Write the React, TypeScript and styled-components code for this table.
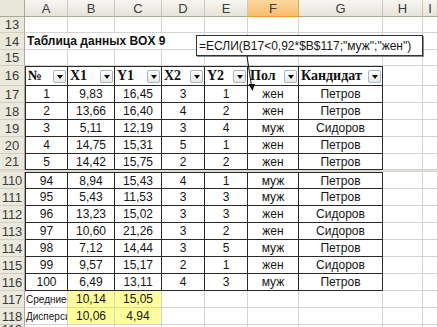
import React from 'react';
import styled, { createGlobalStyle, css } from 'styled-components';

const Global = createGlobalStyle`
  html, body { margin: 0; padding: 0; background: #ffffff; }
  body { width: 438px; height: 327px; overflow: hidden; font-family: "Liberation Sans", Arial, sans-serif; }
`;

const Sheet = styled.div`
  position: relative;
  width: 438px;
  height: 327px;
  overflow: hidden;
  display: grid;
  grid-template-columns: 25px 43px 47px 47px 43px 43px 51px 84px 40px 15px;
  grid-template-rows: 17px 16px 17px 16px 20px repeat(4, 17px) 16px 2px repeat(9, 17px) 10px;
`;

const Corner = styled.div`
  box-sizing: border-box;
  background: #e9e7da;
  border-right: 1px solid #aca899;
  border-bottom: 1px solid #aca899;
`;

const ColHead = styled.div<{ $active?: boolean }>`
  box-sizing: border-box;
  display: flex;
  align-items: center;
  justify-content: center;
  font-size: 13px;
  color: #3c3c3c;
  background: ${p => (p.$active ? 'linear-gradient(#fbd89e, #f7be6c)' : 'linear-gradient(#f7f6f1, #e6e4d9)')};
  border-right: 1px solid ${p => (p.$active ? '#e9a54a' : '#cbc8b8')};
  border-bottom: 1px solid ${p => (p.$active ? '#f29536' : '#aca899')};
`;

const RowHead = styled.div`
  box-sizing: border-box;
  display: flex;
  align-items: center;
  justify-content: center;
  font-size: 13px;
  color: #3c3c3c;
  background: #ebe9dc;
  border-right: 1px solid #aca899;
  border-bottom: 1px solid #d2cfc0;
`;

type Align = 'left' | 'center';

const Cell = styled.div<{ $table?: boolean; $left?: boolean; $top?: boolean; $fill?: string; $align?: Align; $small?: boolean }>`
  box-sizing: border-box;
  min-width: 0;
  border-right: 1px solid ${p => (p.$table ? '#2a2a2a' : '#d3d3d3')};
  border-bottom: 1px solid ${p => (p.$table ? '#2a2a2a' : '#d3d3d3')};
  ${p => p.$left && css`border-left: 1px solid #2a2a2a;`}
  ${p => p.$top && css`border-top: 1px solid #2a2a2a;`}
  background: ${p => p.$fill ?? '#ffffff'};
  display: flex;
  align-items: center;
  justify-content: ${p => (p.$align === 'left' ? 'flex-start' : 'center')};
  padding: 0 ${p => (p.$align === 'left' ? '1px' : '2px')};
  font-size: ${p => (p.$small ? '10px' : '12px')};
  color: #151515;
  white-space: nowrap;
  overflow: hidden;
`;

const Title = styled.div`
  grid-column: span 4;
  box-sizing: border-box;
  border-bottom: 1px solid #d3d3d3;
  border-right: 1px solid #d3d3d3;
  display: flex;
  align-items: center;
  padding-left: 2px;
  font-size: 12px;
  font-weight: bold;
  color: #111;
  white-space: nowrap;
`;

const FilterHead = styled.div<{ $left?: boolean }>`
  box-sizing: border-box;
  min-width: 0;
  border-top: 1px solid #2a2a2a;
  border-right: 1px solid #2a2a2a;
  border-bottom: 1px solid #2a2a2a;
  ${p => p.$left && css`border-left: 1px solid #2a2a2a;`}
  display: flex;
  align-items: flex-end;
  padding: 0 1px 1px 2px;
  font-family: "Liberation Serif", "Times New Roman", serif;
  font-weight: bold;
  font-size: 14px;
  line-height: 16px;
  color: #111;
  white-space: nowrap;
  overflow: hidden;
`;

const FilterButton = styled.span`
  margin-left: auto;
  flex: none;
  box-sizing: border-box;
  width: 13px;
  height: 13px;
  margin-bottom: 1px;
  border: 1px solid #a6b4c6;
  border-radius: 2px;
  background: linear-gradient(#ffffff, #e9e9e3);
  display: flex;
  align-items: center;
  justify-content: center;
  &::after {
    content: '';
    width: 0;
    height: 0;
    border-left: 3.5px solid transparent;
    border-right: 3.5px solid transparent;
    border-top: 4px solid #111;
    margin-top: 1px;
  }
`;

const HiddenBand = styled.div`
  grid-column: 1 / -1;
  background: #dcdacd;
`;

const FormulaBox = styled.div`
  position: absolute;
  left: 196px;
  top: 35px;
  width: 227px;
  height: 21px;
  box-sizing: border-box;
  border: 1px solid #333;
  box-shadow: 1px 1px 0 #8c8c8c;
  background: #ffffff;
  display: flex;
  align-items: center;
  padding-left: 2px;
  font-size: 12px;
  color: #151515;
  white-space: nowrap;
`;

const Arrow = styled.svg`
  position: absolute;
  left: 240px;
  top: 55px;
  width: 20px;
  height: 40px;
  overflow: visible;
`;

const cols = ['A', 'B', 'C', 'D', 'E', 'F', 'G', 'H', 'I'];

type Rec = [string, string, string, string, string, string, string];

const top: [number, Rec][] = [
  [17, ['1', '9,83', '16,45', '3', '1', 'жен', 'Петров']],
  [18, ['2', '13,66', '16,40', '4', '2', 'жен', 'Петров']],
  [19, ['3', '5,11', '12,19', '3', '4', 'муж', 'Сидоров']],
  [20, ['4', '14,75', '15,31', '5', '1', 'жен', 'Петров']],
  [21, ['5', '14,42', '15,75', '2', '2', 'жен', 'Петров']],
];

const bottom: [number, Rec][] = [
  [110, ['94', '8,94', '15,43', '4', '1', 'муж', 'Петров']],
  [111, ['95', '5,43', '11,53', '3', '3', 'муж', 'Петров']],
  [112, ['96', '13,23', '15,02', '3', '3', 'жен', 'Сидоров']],
  [113, ['97', '10,60', '21,26', '3', '2', 'жен', 'Сидоров']],
  [114, ['98', '7,12', '14,44', '3', '5', 'муж', 'Петров']],
  [115, ['99', '9,57', '15,17', '2', '1', 'жен', 'Сидоров']],
  [116, ['100', '6,49', '13,11', '4', '3', 'муж', 'Петров']],
];

const headers = ['№', 'X1', 'Y1', 'X2', 'Y2', 'Пол', 'Кандидат'];

function Blank({ n }: { n: number }) {
  return (
    <>
      {Array.from({ length: n }, (_, i) => (
        <Cell key={i} />
      ))}
    </>
  );
}

function DataRow({ num, rec, topLine }: { num: number; rec: Rec; topLine?: boolean }) {
  return (
    <>
      <RowHead>{num}</RowHead>
      {rec.map((v, i) => (
        <Cell key={i} $table $left={i === 0} $top={topLine}>
          {v}
        </Cell>
      ))}
      <Blank n={2} />
    </>
  );
}

function StatRow({ num, label, b, c }: { num: number; label: string; b: string; c: string }) {
  return (
    <>
      <RowHead>{num}</RowHead>
      <Cell $align="left" $small>
        {label}
      </Cell>
      <Cell $fill="#ffff99">{b}</Cell>
      <Cell $fill="#ffff99">{c}</Cell>
      <Blank n={6} />
    </>
  );
}

export default function App() {
  return (
    <>
      <Global />
      <Sheet>
        <Corner />
        {cols.map(c => (
          <ColHead key={c} $active={c === 'F'}>
            {c}
          </ColHead>
        ))}

        <RowHead>13</RowHead>
        <Blank n={9} />

        <RowHead>14</RowHead>
        <Title>Таблица данных BOX 9</Title>
        <Blank n={5} />

        <RowHead>15</RowHead>
        <Blank n={9} />

        <RowHead>16</RowHead>
        {headers.map((h, i) => (
          <FilterHead key={h} $left={i === 0}>
            {h}
            <FilterButton />
          </FilterHead>
        ))}
        <Blank n={2} />

        {top.map(([n, r]) => (
          <DataRow key={n} num={n} rec={r} />
        ))}

        <HiddenBand />

        {bottom.map(([n, r], i) => (
          <DataRow key={n} num={n} rec={r} topLine={i === 0} />
        ))}

        <StatRow num={117} label="Средние" b="10,14" c="15,05" />
        <StatRow num={118} label="Дисперсия" b="10,06" c="4,94" />

        <RowHead>119</RowHead>
        <Blank n={9} />

        <FormulaBox>=ЕСЛИ(B17&lt;0,92*$B$117;"муж";"жен")</FormulaBox>
        <Arrow viewBox="0 0 20 40">
          <line x1="7" y1="1" x2="11.5" y2="31" stroke="#111" strokeWidth="1" />
          <polygon points="8.5,29 15,29 12.5,36" fill="#111" />
        </Arrow>
      </Sheet>
    </>
  );
}
